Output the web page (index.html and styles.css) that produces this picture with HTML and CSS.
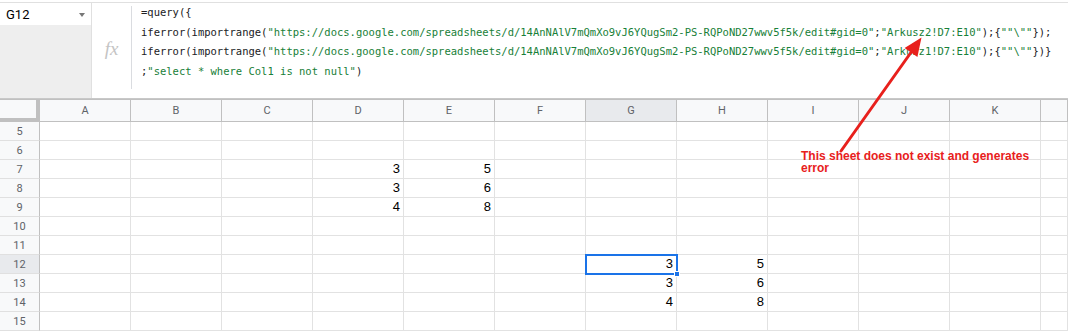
FILE: index.html
```html
<!DOCTYPE html>
<html lang="en">
<head>
    <meta charset="UTF-8">
    <title>Sheet - query importrange</title>
    <link rel="stylesheet" href="styles.css">
</head>
<body>
    <div class="formula-bar">
        <div class="name-box">
            <div class="name-cell"><span>G12</span><span class="caret"></span></div>
        </div>
        <div class="fx-icon">fx</div>
        <div class="sep"></div>
        <div class="formula">
            <div>=query({</div>
            <div>iferror(importrange(<span class="str">"https://docs.google.com/spreadsheets/d/14AnNAlV7mQmXo9vJ6YQugSm2-PS-RQPoND27wwv5f5k/edit#gid=0"</span>;<span class="str">"Arkusz2!D7:E10"</span>);{<span class="str">""\""</span>});</div>
            <div>iferror(importrange(<span class="str">"https://docs.google.com/spreadsheets/d/14AnNAlV7mQmXo9vJ6YQugSm2-PS-RQPoND27wwv5f5k/edit#gid=0"</span>;<span class="str">"Arkusz1!D7:E10"</span>);{<span class="str">""\""</span>})}</div>
            <div>;<span class="str">"select * where Col1 is not null"</span>)</div>
        </div>
    </div>

    <div class="grid">
        <div class="corner"></div>
        <div class="col-head">A</div><div class="col-head">B</div><div class="col-head">C</div><div class="col-head">D</div>
        <div class="col-head">E</div><div class="col-head">F</div><div class="col-head sel">G</div><div class="col-head">H</div>
        <div class="col-head">I</div><div class="col-head">J</div><div class="col-head">K</div><div class="col-head"></div>

        <div class="row-head">5</div>
        <div class="cell"></div><div class="cell"></div><div class="cell"></div><div class="cell"></div><div class="cell"></div><div class="cell"></div>
        <div class="cell"></div><div class="cell"></div><div class="cell"></div><div class="cell"></div><div class="cell"></div><div class="cell"></div>

        <div class="row-head">6</div>
        <div class="cell"></div><div class="cell"></div><div class="cell"></div><div class="cell"></div><div class="cell"></div><div class="cell"></div>
        <div class="cell"></div><div class="cell"></div><div class="cell"></div><div class="cell"></div><div class="cell"></div><div class="cell"></div>

        <div class="row-head">7</div>
        <div class="cell"></div><div class="cell"></div><div class="cell"></div><div class="cell">3</div><div class="cell">5</div><div class="cell"></div>
        <div class="cell"></div><div class="cell"></div><div class="cell"></div><div class="cell"></div><div class="cell"></div><div class="cell"></div>

        <div class="row-head">8</div>
        <div class="cell"></div><div class="cell"></div><div class="cell"></div><div class="cell">3</div><div class="cell">6</div><div class="cell"></div>
        <div class="cell"></div><div class="cell"></div><div class="cell"></div><div class="cell"></div><div class="cell"></div><div class="cell"></div>

        <div class="row-head">9</div>
        <div class="cell"></div><div class="cell"></div><div class="cell"></div><div class="cell">4</div><div class="cell">8</div><div class="cell"></div>
        <div class="cell"></div><div class="cell"></div><div class="cell"></div><div class="cell"></div><div class="cell"></div><div class="cell"></div>

        <div class="row-head">10</div>
        <div class="cell"></div><div class="cell"></div><div class="cell"></div><div class="cell"></div><div class="cell"></div><div class="cell"></div>
        <div class="cell"></div><div class="cell"></div><div class="cell"></div><div class="cell"></div><div class="cell"></div><div class="cell"></div>

        <div class="row-head">11</div>
        <div class="cell"></div><div class="cell"></div><div class="cell"></div><div class="cell"></div><div class="cell"></div><div class="cell"></div>
        <div class="cell"></div><div class="cell"></div><div class="cell"></div><div class="cell"></div><div class="cell"></div><div class="cell"></div>

        <div class="row-head sel">12</div>
        <div class="cell"></div><div class="cell"></div><div class="cell"></div><div class="cell"></div><div class="cell"></div><div class="cell"></div>
        <div class="cell active">3<span class="handle"></span></div><div class="cell">5</div><div class="cell"></div><div class="cell"></div><div class="cell"></div><div class="cell"></div>

        <div class="row-head">13</div>
        <div class="cell"></div><div class="cell"></div><div class="cell"></div><div class="cell"></div><div class="cell"></div><div class="cell"></div>
        <div class="cell">3</div><div class="cell">6</div><div class="cell"></div><div class="cell"></div><div class="cell"></div><div class="cell"></div>

        <div class="row-head">14</div>
        <div class="cell"></div><div class="cell"></div><div class="cell"></div><div class="cell"></div><div class="cell"></div><div class="cell"></div>
        <div class="cell">4</div><div class="cell">8</div><div class="cell"></div><div class="cell"></div><div class="cell"></div><div class="cell"></div>

        <div class="row-head">15</div>
        <div class="cell"></div><div class="cell"></div><div class="cell"></div><div class="cell"></div><div class="cell"></div><div class="cell"></div>
        <div class="cell"></div><div class="cell"></div><div class="cell"></div><div class="cell"></div><div class="cell"></div><div class="cell"></div>
    </div>

    <!-- annotation drawn over the sheet -->
    <svg class="arrow" width="1068" height="332" viewBox="0 0 1068 332">
        <line x1="841" y1="151" x2="912" y2="51" stroke="#e8201c" stroke-width="3" stroke-linecap="round"/>
        <polygon points="921.5,37.5 917.4,57 904.6,48" fill="#e8201c"/>
    </svg>
    <div class="note">This sheet does not exist and generates<br>error</div>
</body>
</html>
```

FILE: styles.css
```css
* {
    box-sizing: border-box;
    margin: 0;
    padding: 0;
}

body {
    width: 1068px;
    height: 332px;
    overflow: hidden;
    background: #ffffff;
    font-family: Roboto, 'Liberation Sans', Arial, sans-serif;
}

/* formula bar */
.formula-bar {
    display: flex;
    margin-top: 2px;
    height: 97px;
    border-top: 1px solid #e0e0e0;
    border-bottom: 1px solid #c8c8c8;
}

.name-box {
    width: 92px;
    background: #eeeeee;
    border-right: 1px solid #e0e0e0;
}

.name-cell {
    display: flex;
    justify-content: space-between;
    align-items: center;
    height: 22px;
    padding: 0 6px 0 6px;
    background: #ffffff;
    font-size: 13px;
    color: #000;
}

.caret {
    width: 0;
    height: 0;
    border-left: 3.5px solid transparent;
    border-right: 3.5px solid transparent;
    border-top: 4px solid #777;
    margin-top: 2px;
}

.fx-icon {
    width: 39px;
    display: flex;
    align-items: center;
    justify-content: center;
    padding-bottom: 3px;
    font-family: 'Liberation Serif', serif;
    font-style: italic;
    font-size: 19px;
    color: #c4c4c4;
}

.sep {
    width: 1px;
    margin: 3px 0 9px;
    background: #dadce0;
}

.formula {
    flex: 1;
    padding: 0 0 0 9px;
    font-family: 'DejaVu Sans Mono', 'Liberation Mono', monospace;
    font-size: 10.5px;
    line-height: 19.6px;
    color: #202124;
    white-space: nowrap;
}

.str {
    color: #188038;
}

/* sheet grid */
.grid {
    display: grid;
    grid-template-columns: 40px repeat(11, 91px) 1fr;
    grid-template-rows: 23px;
    grid-auto-rows: 19px;
}

.corner {
    background: #f8f9fa;
    border-top: 1px solid #c0c0c0;
    border-right: 4px solid #c0c0c0;
    border-bottom: 4px solid #c0c0c0;
}

.col-head {
    display: flex;
    align-items: center;
    justify-content: center;
    background: #f8f9fa;
    border-top: 1px solid #c0c0c0;
    border-right: 1px solid #c0c0c0;
    border-bottom: 1px solid #c0c0c0;
    font-size: 11px;
    color: #5f6368;
}

.row-head {
    display: flex;
    align-items: center;
    justify-content: center;
    background: #f8f9fa;
    border-right: 1px solid #c0c0c0;
    border-bottom: 1px solid #e0e0e0;
    font-size: 11px;
    color: #5f6368;
}

.col-head.sel,
.row-head.sel {
    background: #e8eaed;
}

.cell {
    position: relative;
    border-right: 1px solid #e2e2e2;
    border-bottom: 1px solid #e2e2e2;
    padding-right: 3px;
    text-align: right;
    font-family: 'Liberation Sans', Arial, sans-serif;
    font-size: 13px;
    line-height: 18px;
    color: #000;
}

.cell.active {
    outline: 2px solid #1a73e8;
    outline-offset: -1px;
    z-index: 1;
}

.handle {
    position: absolute;
    right: -4px;
    bottom: -4px;
    width: 6px;
    height: 6px;
    background: #1a73e8;
    border: 1px solid #ffffff;
}

/* red annotation */
.arrow {
    position: absolute;
    top: 0;
    left: 0;
    pointer-events: none;
}

.note {
    position: absolute;
    left: 801px;
    top: 150px;
    font-family: 'Liberation Sans', Arial, sans-serif;
    font-size: 12px;
    font-weight: bold;
    line-height: 12px;
    color: #e8201c;
    white-space: nowrap;
}
```
